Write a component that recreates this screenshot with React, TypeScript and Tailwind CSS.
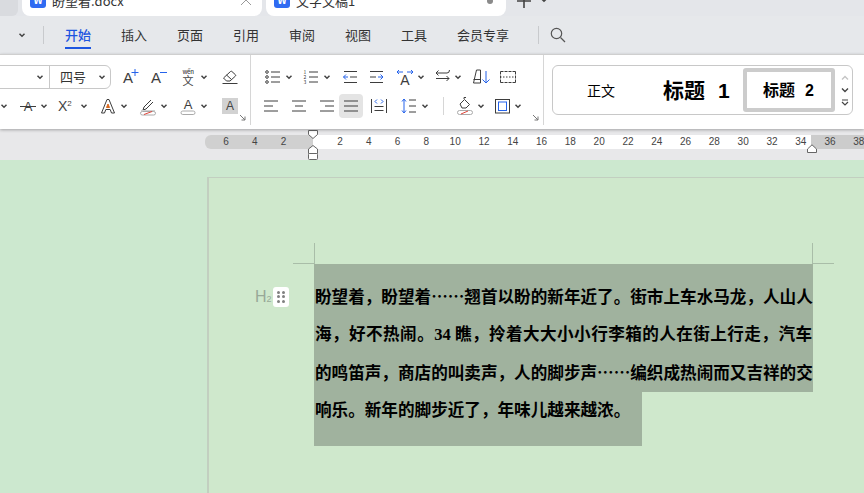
import type { ReactNode } from "react";

const INK = "#3d3d3d";
const BLUE = "#2563eb";
const FONT = "[font-family:'Noto_Sans_CJK_SC','Liberation_Sans',sans-serif]";

function Ic({ children, w = 18, h = 18, className = "" }: { children: ReactNode; w?: number; h?: number; className?: string }) {
  return (
    <svg width={w} height={h} viewBox={`0 0 ${w} ${h}`} fill="none" stroke={INK} strokeWidth="1" className={"shrink-0 " + className}>
      {children}
    </svg>
  );
}

// letter used inside ribbon icons, kept as real text
function Letter({ x = 9, y = 14, size = 15, fill = INK }: { x?: number; y?: number; size?: number; fill?: string }) {
  return (
    <text x={x} y={y} fontSize={size} textAnchor="middle" fill={fill} stroke="none" fontFamily="Liberation Sans">
      A
    </text>
  );
}

function Chev({ className = "" }: { className?: string }) {
  return (
    <svg width="10" height="10" viewBox="0 0 10 10" fill="none" stroke="#444" strokeWidth="1.5" className={"shrink-0 " + className}>
      <path d="M2.5 3.8 5 6.2l2.5-2.4" />
    </svg>
  );
}

function WpsLogo() {
  return (
    <span className="relative flex h-4 w-4 shrink-0 items-center justify-center rounded-[3px] bg-[#2f6bf2] text-[10px] font-bold leading-none text-white">
      W
    </span>
  );
}

function Launcher() {
  return (
    <svg width="7" height="7" viewBox="0 0 7 7" fill="none" stroke="#777" strokeWidth="1" className="absolute bottom-[4px] right-[4px]">
      <path d="M1 1l5 5M6 2.5V6H2.5" />
    </svg>
  );
}

function Lines({ ys, x1 = 1, x2 = 15 }: { ys: number[]; x1?: number; x2?: number }) {
  return (
    <>
      {ys.map((y) => (
        <path key={y} d={`M${x1} ${y}H${x2}`} />
      ))}
    </>
  );
}

function Align({ kind }: { kind: "l" | "c" | "r" | "j" }) {
  const mid = kind === "l" ? [1, 10] : kind === "c" ? [4, 12] : kind === "r" ? [6, 15] : [1, 15];
  return (
    <Ic w={16} h={16}>
      <path d="M1 3H15M1 13H15" />
      <path d={`M${mid[0]} 8H${mid[1]}`} />
    </Ic>
  );
}

function Tabs() {
  return (
    <div className="flex h-4 shrink-0 items-end overflow-hidden bg-[#e4e6ea] text-[13px] leading-none text-[#333]">
      <div className="h-4 w-[18px] shrink-0 rounded-br-md bg-[#d9dbdf]" />
      <div className="ml-1 flex h-4 w-[240px] shrink-0 items-start rounded-b-lg bg-white pl-2">
        <div className="-mt-2 flex w-full items-center">
          <WpsLogo />
          <span className="ml-[6px]">盼望着.docx</span>
          <svg width="10" height="10" viewBox="0 0 10 10" stroke="#999" className="ml-auto mr-[11px]">
            <path d="M0 0l10 10M10 0 0 10" />
          </svg>
        </div>
      </div>
      <div className="ml-1 flex h-4 w-[240px] shrink-0 items-start rounded-b-lg bg-white pl-2">
        <div className="-mt-2 flex w-full items-center">
          <WpsLogo />
          <span className="ml-[6px]">文字文稿1</span>
          <span className="ml-auto mr-[13px] mt-[2px] h-[6px] w-[6px] rounded-full bg-[#8a8a8a]" />
        </div>
      </div>
      <div className="ml-[10px] flex h-4 items-start">
        <svg width="16" height="16" viewBox="0 0 16 16" stroke="#444" strokeWidth="1.6" className="-mt-[7px]">
          <path d="M8 1V15M1 8H15" />
        </svg>
        <Chev className="-mt-[5px] ml-[7px]" />
      </div>
    </div>
  );
}

const MENU = ["插入", "页面", "引用", "审阅", "视图", "工具", "会员专享"];

function MenuBar() {
  return (
    <div className="flex h-[38px] shrink-0 items-center bg-[#e6e8eb] text-[13px] text-[#333]">
      <Chev className="-ml-[8px] mt-[-4px]" />
      <Chev className="ml-[15px]" />
      <div className="ml-[16px] h-[18px] w-px bg-[#c8cacd]" />
      <div className="relative ml-[21px] flex h-full items-center font-medium text-[#1d55e0]">
        开始
        <div className="absolute bottom-[5px] left-0 right-0 h-[2px] bg-[#1d55e0]" />
      </div>
      {MENU.map((m) => (
        <span key={m} className="ml-[30px]">
          {m}
        </span>
      ))}
      <div className="ml-[29px] h-[18px] w-px bg-[#c8cacd]" />
      <svg width="18" height="18" viewBox="0 0 18 18" fill="none" stroke="#555" strokeWidth="1.2" className="ml-[10px]">
        <circle cx="7.5" cy="7.5" r="5.2" />
        <path d="M11.5 11.5 16 16" />
      </svg>
    </div>
  );
}

function FontGroup() {
  return (
    <div className="relative flex h-full w-[251px] shrink-0 flex-col border-r border-[#d6d6d6]">
      <div className="mt-[10px] flex h-[24px] items-center">
        <div className="-ml-[20px] flex h-[24px] w-[131px] shrink-0 items-center rounded-md border border-[#c8c8c8] text-[13px] text-[#333]">
          <div className="flex h-full w-[69px] items-center justify-end border-r border-[#c8c8c8] pr-[4px]">
            <Chev />
          </div>
          <span className="ml-[10px]">四号</span>
          <Chev className="ml-[11px]" />
        </div>
        <Ic className="ml-[10px]" w={18}>
          <Letter x={7} y={15} size={15} />
          <path d="M14 1V8M10.5 4.500H17.500" stroke={BLUE} />
        </Ic>
        <Ic className="ml-[10px]" w={18}>
          <Letter x={7} y={15} size={15} />
          <path d="M11 4.500H18" stroke={BLUE} />
        </Ic>
        <div className="relative ml-[11px] flex h-[18px] w-[20px] shrink-0 flex-col items-center text-[#444]">
          <span className="text-[6px] font-medium leading-[7px] tracking-tighter">wến</span>
          <span className="text-[11px] leading-[11px]">文</span>
        </div>
        <Chev className="ml-[1px]" />
        <Ic className="ml-[12px]" w={18}>
          <path d="M2.500 10 9.500 3.500a1 1 0 0 1 1.400 0l3.500 3.200a1 1 0 0 1 0 1.400L9 13H5.500z" />
          <path d="M5.500 7 10.500 11.500" />
          <path d="M1.500 15.500H16.500" />
        </Ic>
      </div>
      <div className="mt-[5px] flex h-[24px] items-center">
        <Chev className="-ml-[1px]" />
        <Ic className="ml-[9px]" w={20}>
          <Letter x={10} y={14} size={13} />
          <path d="M2 9.500H18" />
        </Ic>
        <Chev className="ml-[1px]" />
        <div className="ml-[9px] flex w-[20px] shrink-0 items-start text-[14px] leading-none text-[#444] [font-family:'Liberation_Sans',sans-serif]">
          X<span className="text-[8px] leading-[10px]">2</span>
        </div>
        <Chev className="ml-[1px]" />
        <Ic className="ml-[9px]" w={20}>
          <path d="M3.500 16 9 2.500h2L16.500 16h-3l-1.300-3.500H7.800L6.500 16z" />
          <path d="M8.500 10.500 10 7l1.500 3.500z" fill="#d9691e" stroke="#d9691e" />
        </Ic>
        <Chev className="ml-[1px]" />
        <Ic className="ml-[9px]" w={20} h={20}>
          <path d="M6 11 13 4M6 11l-1 3 3-1 7-7" />
          <path d="M3 14.500H17" stroke="#d0d0d0" />
          <rect x="2.500" y="15.500" width="15" height="3.500" rx="1.750" stroke="#aaa" />
          <path d="M6 18.500 14 15.500" stroke="#e0453a" />
        </Ic>
        <Chev className="ml-[1px]" />
        <Ic className="ml-[9px]" w={20} h={20}>
          <Letter x={10} y={13} size={13} />
          <rect x="3" y="15" width="14" height="3.500" rx="1.750" stroke="#aaa" />
        </Ic>
        <Chev className="ml-[1px]" />
        <span className="ml-[13px] flex h-4 w-4 shrink-0 items-center justify-center bg-[#d2d2d2] text-[12px] text-[#444] [font-family:'Liberation_Sans',sans-serif]">
          A
        </span>
      </div>
      <Launcher />
    </div>
  );
}

function ParaGroup() {
  return (
    <div className="relative flex h-full w-[293px] shrink-0 flex-col border-r border-[#d6d6d6]">
      <div className="mt-[10px] flex h-[24px] items-center">
        <Ic className="ml-[14px]" w={16} h={16}>
          <circle cx="2" cy="3" r="1.300" />
          <circle cx="2" cy="8" r="1.300" />
          <circle cx="2" cy="13" r="1.300" />
          <Lines x1={6} ys={[3, 8, 13]} />
        </Ic>
        <Chev className="ml-[3px]" />
        <Ic className="ml-[9px]" w={16} h={16}>
          <text x="0.500" y="5" fontSize="5" fill={INK} stroke="none">1</text>
          <text x="0.500" y="10" fontSize="5" fill={INK} stroke="none">2</text>
          <text x="0.500" y="15" fontSize="5" fill={INK} stroke="none">3</text>
          <Lines x1={6} ys={[3, 8, 13]} />
        </Ic>
        <Chev className="ml-[3px]" />
        <Ic className="ml-[10px]" w={16} h={16}>
          <path d="M2 2.500H15M8 8H15M2 13.500H15" />
          <path d="M6 8H1.500M4 5.500 1.500 8 4 10.500" stroke={BLUE} />
        </Ic>
        <Ic className="ml-[11px]" w={16} h={16}>
          <path d="M1 2.500H14M1 8H7M1 13.500H14" />
          <path d="M9 8H14M11.500 5.500 14 8l-2.500 2.500" stroke={BLUE} />
        </Ic>
        <Ic className="ml-[11px]" w={18} h={18}>
          <Letter x={9} y={17} size={14} />
          <path d="M1 4H7M3 2 1 4l2 2M11 4H17M15 2l2 2-2 2" stroke={BLUE} />
        </Ic>
        <Chev className="ml-[2px]" />
        <Ic className="ml-[9px]" w={16} h={16}>
          <path d="M1 4H12Q14.500 4 14.500 1M3.500 1.500 1 4l2.500 2.500" />
          <path d="M1 9.500H14M11.500 7 14 9.500 11.500 12" />
        </Ic>
        <Chev className="ml-[2px]" />
        <Ic className="ml-[9px]" w={18} h={18}>
          <path d="M1.500 15 4.500 2h4v13zM1.500 11.500H8.500" />
          <path d="M14 3V15M10.500 11.500 14 15l3.500-3.500" stroke={BLUE} />
        </Ic>
        <Ic className="ml-[10px]" w={16} h={16}>
          <path d="M0.500 2.500H15.500M0.500 13.500H15.500M0.500 2.500V13.500M15.500 2.500V13.500" strokeDasharray="3 1" />
          <path d="M0 8H16" strokeDasharray="1.500 1.500" />
        </Ic>
      </div>
      <div className="mt-[5px] flex h-[24px] items-center">
        <span className="ml-[12px]"><Align kind="l" /></span>
        <span className="ml-[12px]"><Align kind="c" /></span>
        <span className="ml-[12px]"><Align kind="r" /></span>
        <span className="ml-[4px] flex h-[24px] w-[24px] shrink-0 items-center justify-center rounded-[4px] bg-[#e4e4e4]">
          <Align kind="j" />
        </span>
        <Ic className="ml-[7px]" w={18} h={18}>
          <path d="M1.500 2V16M16.500 2V16M4.500 9.500H13.500M4.500 13.500H13.500" />
          <path d="M7 2.500 5 4.500 7 6.500M11 2.500l2 2-2 2" stroke={BLUE} />
        </Ic>
        <Ic className="ml-[13px]" w={16} h={18}>
          <path d="M3 2V16M1 4.500 3 2l2 2.500M1 13.500 3 16l2-2.500" stroke={BLUE} />
          <path d="M8 3H15M8 9H15M8 15H15" />
        </Ic>
        <Chev className="ml-[3px]" />
        <div className="ml-[13px] h-[18px] w-px bg-[#d6d6d6]" />
        <Ic className="ml-[12px]" w={18} h={20}>
          <path d="M4 8 8.500 3.500 13.500 8.500 10 12H6z" />
          <path d="M8 3V1.500H10" />
          <rect x="1.500" y="14.500" width="15" height="4" rx="2" stroke="#aaa" />
          <path d="M5 18 12 15" stroke="#e0453a" />
        </Ic>
        <Chev className="ml-[2px]" />
        <Ic className="ml-[9px]" w={15} h={16}>
          <rect x="0.500" y="1.500" width="14" height="13.500" />
          <rect x="3.500" y="4" width="8" height="8.500" stroke={BLUE} />
        </Ic>
        <Chev className="ml-[3px]" />
      </div>
      <Launcher />
    </div>
  );
}

function StyleGallery() {
  return (
    <div className="ml-2 mt-[10px] flex h-[50px] w-[301px] shrink-0 items-center rounded-md border border-[#c8c8c8] text-black">
      <span className="ml-[34px] w-[28px] shrink-0 text-[14px] font-normal">正文</span>
      <span className="ml-[48px] w-[66px] shrink-0 whitespace-nowrap text-[21px] font-bold">
        标题<span className="ml-[13px] [font-family:'Liberation_Sans',sans-serif]">1</span>
      </span>
      <span className="ml-[14px] flex h-[44px] w-[92px] shrink-0 items-center rounded-[3px] border-[4px] border-[#cccccc] pl-[16px] text-[16px] font-bold">
        <span className="whitespace-nowrap">
          标题<span className="ml-[10px] [font-family:'Liberation_Sans',sans-serif]">2</span>
        </span>
      </span>
      <div className="ml-[3px] flex h-full flex-1 flex-col items-center justify-center gap-[6px]">
        <svg width="8" height="6" viewBox="0 0 8 6" fill="none" stroke="#c4c4c4" strokeWidth="1.400"><path d="M1 4.500 4 1.500l3 3" /></svg>
        <svg width="8" height="6" viewBox="0 0 8 6" fill="none" stroke="#444" strokeWidth="1.400"><path d="M1 1.500 4 4.500l3-3" /></svg>
        <svg width="8" height="7" viewBox="0 0 8 7" fill="none" stroke="#444" strokeWidth="1.200"><path d="M1 1H7M1 3 4 6l3-3" /></svg>
      </div>
    </div>
  );
}

function Ribbon() {
  return (
    <div className="relative z-10 flex h-[75px] shrink-0 border-t border-[#cfcfcf] bg-white pb-[4px] text-[13px] shadow-[0_1px_3px_rgba(0,0,0,0.3)]">
      <FontGroup />
      <ParaGroup />
      <StyleGallery />
    </div>
  );
}

function RulerNums({ nums }: { nums: number[] }) {
  return (
    <>
      {nums.map((n) => (
        <span key={n} className="w-[28.8px] shrink-0 text-center">
          {n}
        </span>
      ))}
    </>
  );
}

function Ruler() {
  return (
    <div className="relative flex h-[31px] shrink-0 bg-[#e8e8ea] pl-[205px] pt-[6px] text-[10px] leading-[14px] text-[#444] [font-family:'Liberation_Sans',sans-serif]">
      <div className="flex h-[14px] w-[108px] shrink-0 rounded-l-md bg-[#d0d0d0] pl-[6.6px]">
        <RulerNums nums={[6, 4, 2]} />
      </div>
      <div className="flex h-[14px] w-[498px] shrink-0 bg-white pl-[12.600px]">
        <RulerNums nums={[2, 4, 6, 8, 10, 12, 14, 16, 18, 20, 22, 24, 26, 28, 30, 32, 34]} />
      </div>
      <div className="flex h-[14px] flex-1 overflow-hidden bg-[#cccccc] pl-[4.600px]">
        <RulerNums nums={[36, 38]} />
      </div>
      <svg width="12" height="30" viewBox="0 0 12 30" className="absolute left-[307px] top-px" fill="#fff" stroke="#666">
        <path d="M1.500 0.500H10.500V4.500L6 8.500 1.500 4.500z" />
        <path d="M6 15.500 10.500 19V23.500H1.500V19z" />
        <rect x="1.500" y="23.500" width="9" height="6" rx="1" />
      </svg>
      <svg width="12" height="10" viewBox="0 0 12 10" className="absolute left-[806px] top-[15px]" fill="#fff" stroke="#666">
        <path d="M6 0.800 10.500 5V8.500H1.500V5z" />
      </svg>
    </div>
  );
}

function Paper() {
  return (
    <div className="relative ml-[207px] mt-[17px] flex-1 border-l-2 border-t border-[#c2cfc0] bg-[#cfe8cc] pl-[105px] pt-[86px]">
      {/* 页边裁剪标记 */}
      <div className="absolute left-[105px] top-[65px] h-[21px] w-px bg-[#a9bda8]" />
      <div className="absolute left-[84px] top-[85px] h-px w-[21px] bg-[#a9bda8]" />
      <div className="absolute left-[603px] top-[65px] h-[21px] w-px bg-[#a9bda8]" />
      <div className="absolute left-[604px] top-[85px] h-px w-[21px] bg-[#a9bda8]" />

      {/* 段落标记 */}
      <div className="absolute left-[46px] top-[109px] flex items-center">
        <span className="w-[18px] text-[16px] font-light leading-none text-[#98a898] [font-family:'Liberation_Sans',sans-serif]">
          H<span className="text-[9px]">2</span>
        </span>
        <div className="grid h-5 w-4 grid-cols-2 place-items-center rounded-[3px] bg-white px-[3px] py-[3px]">
          {[0, 1, 2, 3, 4, 5].map((i) => (
            <span key={i} className="h-[3px] w-[3px] rounded-full bg-[#808080]" />
          ))}
        </div>
      </div>

      <div className="text-[16.6px] font-semibold leading-[37.4px] text-black">
        <div className="w-[499px] bg-[#a0b29e] pb-px pl-px pr-px pt-[14px]">
          <div className="whitespace-nowrap [text-align-last:justify]">盼望着，盼望着……翘首以盼的新年近了。街市上车水马龙，人山人</div>
          <div className="whitespace-nowrap [text-align-last:justify]">
            海，好不热闹。<span className="[font-family:'Liberation_Serif',serif]">34</span> 瞧，拎着大大小小行李箱的人在街上行走，汽车
          </div>
          <div className="whitespace-nowrap [text-align-last:justify]">的鸣笛声，商店的叫卖声，人的脚步声……编织成热闹而又吉祥的交</div>
        </div>
        <div className="-mt-px w-[328px] whitespace-nowrap bg-[#a0b29e] pb-[17px] pl-px">响乐。新年的脚步近了，年味儿越来越浓。</div>
      </div>
    </div>
  );
}

export default function App() {
  return (
    <div className={"flex h-[493px] w-[864px] flex-col overflow-hidden bg-[#cce8cf] " + FONT}>
      <Tabs />
      <MenuBar />
      <Ribbon />
      <Ruler />
      <Paper />
    </div>
  );
}
